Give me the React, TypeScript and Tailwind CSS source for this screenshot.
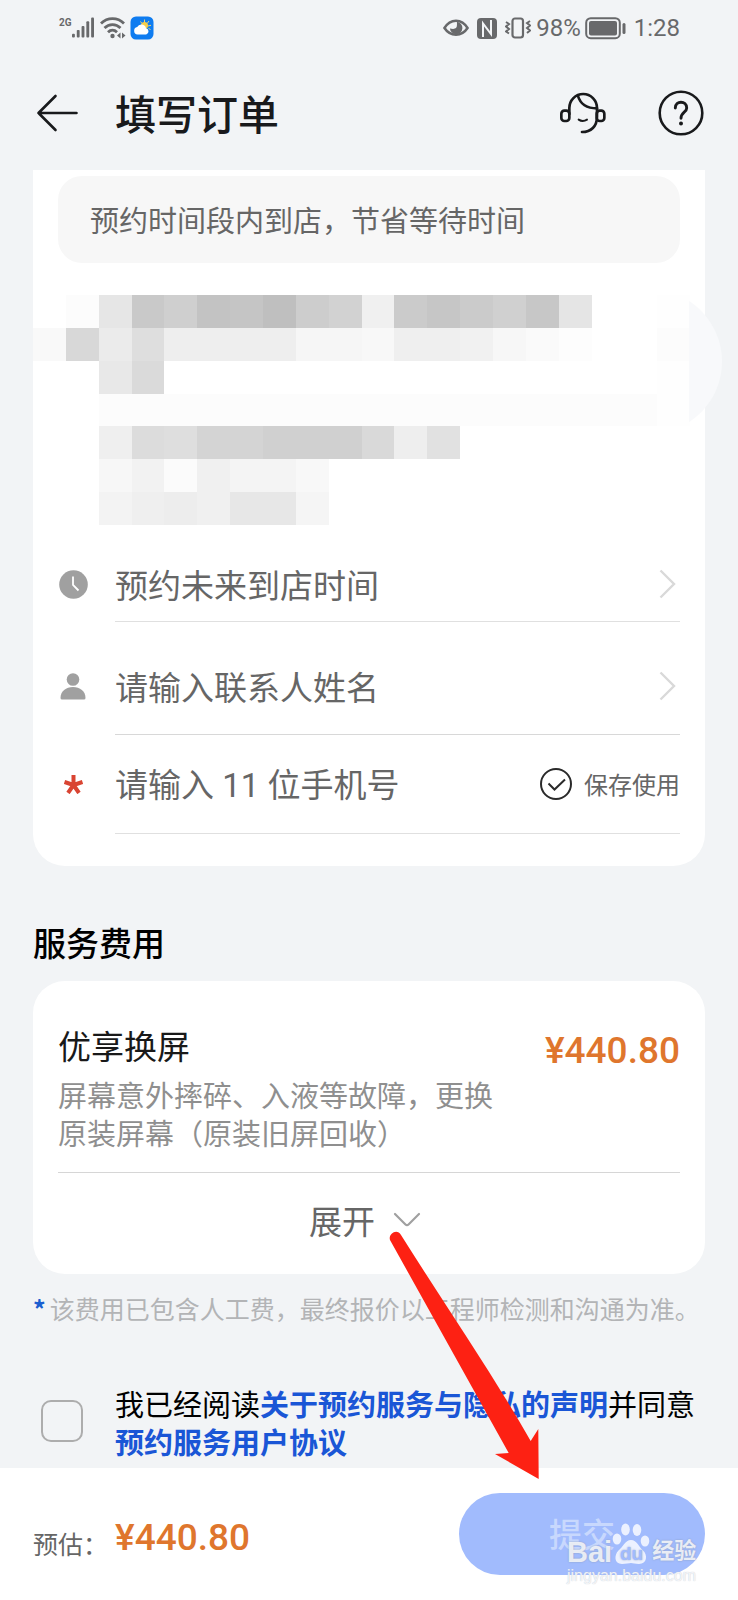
import React, { useState } from "react";

const FONT = "font-['Noto_Sans_CJK_SC',Roboto,sans-serif]";

// one entry per mosaic cell, "" is see-through
const mosaic: string[][] = [
  ["", "fcfcfc", "e6e6e6", "c9c9c9", "cfcfcf", "c3c3c3", "c5c5c5", "bfbfbf", "cdcdcd", "d2d2d2", "f0f0f0", "cbcbcb", "c6c6c6", "cbcbcb", "d0d0d0", "c7c7c7", "e5e5e5", "", "", "fefefe", ""],
  ["f9f9f9", "d8d8d8", "ebebeb", "dedede", "eeeeee", "eeeeee", "eeeeee", "eeeeee", "f6f6f6", "f6f6f6", "f8f8f8", "efefef", "efefef", "f1f1f1", "f7f7f7", "fafafa", "fdfdfd", "", "", "fcfcfc", ""],
  ["", "", "e8e8e8", "dadada", "", "", "", "", "", "", "", "", "", "", "", "", "", "", "", "fefefe", ""],
  ["", "", "fcfcfc", "fcfcfc", "fcfcfc", "fcfcfc", "fcfcfc", "fcfcfc", "fcfcfc", "fcfcfc", "fcfcfc", "fcfcfc", "fcfcfc", "fcfcfc", "fcfcfc", "fcfcfc", "fcfcfc", "fcfcfc", "fcfcfc", "fefefe", ""],
  ["", "", "efefef", "dcdcdc", "dedede", "d4d4d4", "d4d4d4", "d0d0d0", "d0d0d0", "d0d0d0", "d9d9d9", "eeeeee", "e1e1e1", "", "", "", "", "", "", "", ""],
  ["", "", "f7f7f7", "f2f2f2", "fbfbfb", "f0f0f0", "f4f4f4", "f4f4f4", "f8f8f8", "", "", "", "", "", "", "", "", "", "", "", ""],
  ["", "", "f3f3f3", "efefef", "ededed", "f0f0f0", "e7e7e7", "e7e7e7", "f5f5f5", "", "", "", "", "", "", "", "", "", "", "", ""],
];

const StatusBar = () => (
  <div className="flex h-14 items-center justify-between pl-[59px] pr-[58px] font-[Roboto,sans-serif] text-[#68696b]">
    <div className="flex items-center">
      <span className="self-start text-[10px] font-bold leading-[13px]">2G</span>
      <svg width="22" height="22" viewBox="0 0 23 22" fill="currentColor">
        <rect x="0" y="17" width="3" height="4" rx="1" />
        <rect x="5" y="13" width="3" height="8" rx="1" />
        <rect x="10" y="9" width="3" height="12" rx="1" />
        <rect x="15" y="4" width="3" height="17" rx="1" />
        <rect x="20" y="0" width="3" height="21" rx="1" />
      </svg>
      <svg className="ml-[6px]" width="26" height="22" viewBox="0 0 26 22" fill="none" stroke="currentColor" strokeWidth="2.8">
        <path d="M1 6.5C7.500 0 17.500 0 24 6.500" />
        <path d="M4.500 11C9 6.500 16 6.500 20.500 11" />
        <path d="M8 15.200C10.700 12.600 14.300 12.600 17 15.200" />
        <circle cx="12.500" cy="19" r="2.200" fill="currentColor" stroke="none" />
        <path d="M20.500 15.500v6l-3.500-3zM22 15.500v6l3.500-3z" fill="currentColor" stroke="none" />
      </svg>
      <svg className="ml-1" width="24" height="24" viewBox="0 0 24 24">
        <rect x="0.500" y="0.500" width="23" height="23" rx="5.500" fill="#0f7cf0" />
        <g stroke="#f4d46a" strokeWidth="1">
          <path d="M14.500 3.500v3M19 5l-1.800 2.400M21 9.300l-3 .7M20.500 13.500l-2-1M10.500 5.500l1.500 2" />
        </g>
        <circle cx="14.500" cy="9.500" r="3.500" fill="#f8cf4a" />
        <path d="M7.500 18.500a3.800 3.800 0 0 1-.3-7.500 4.700 4.700 0 0 1 8.800 1.300 3.200 3.200 0 0 1 .2 6.200z" fill="#fff" />
      </svg>
    </div>

    <div className="flex items-center text-2xl leading-7">
      <svg width="26" height="20" viewBox="0 0 27 20" fill="none" stroke="currentColor" strokeWidth="2.600">
        <path d="M1.500 10C7.500 -.2 19.500 -.2 25.500 10C19.500 19.200 7.500 19.200 1.500 10z" />
        <path d="M14.500 3.500a6.500 6.500 0 1 1-7.300 7l3.300.5a4 4 0 0 0 4-4z" fill="currentColor" stroke="none" />
      </svg>
      <svg className="ml-2" width="20" height="21" viewBox="0 0 20 21">
        <rect width="20" height="21" rx="4" fill="currentColor" />
        <path d="M6 19V5.500L14 16V2" fill="none" stroke="#f2f4f6" strokeWidth="2" />
      </svg>
      <svg className="ml-2" width="26" height="22" viewBox="0 0 26 22" fill="none" stroke="currentColor">
        <rect x="7.500" y="1.500" width="10.500" height="19" rx="2.500" strokeWidth="2.200" />
        <path d="M1 5l3 2-3 2.500 3 2.500-3 2.500 3 2M25 4l-3 2 3 2.500-3 2.500 3 2.500-3 2.500" strokeWidth="2" />
      </svg>
      <span className="ml-[5px]">98%</span>
      <svg className="ml-1" width="41" height="23" viewBox="0 0 41 23">
        <rect x="1.200" y="1.200" width="33.600" height="20" rx="4.500" fill="none" stroke="currentColor" strokeWidth="2" />
        <rect x="4" y="4" width="28" height="14.500" rx="2" fill="currentColor" />
        <rect x="37.500" y="6" width="3" height="11" rx="1.500" fill="currentColor" />
      </svg>
      <span className="ml-2">1:28</span>
    </div>
  </div>
);

const Header = () => (
  <header className="flex h-[114px] items-center pl-9 pr-[34px] text-[#191a1c]">
    <button aria-label="返回">
      <svg width="43" height="38" viewBox="0 0 43 38" fill="none" stroke="currentColor" strokeWidth="2.600" strokeLinecap="round" strokeLinejoin="round">
        <path d="M40.500 19H2.500M19.500 2L2.500 19L19.500 36" />
      </svg>
    </button>
    <h1 className="ml-9 flex-1 pb-[2px] text-[41px] font-medium leading-[56px]">填写订单</h1>
    <button aria-label="客服">
      <svg width="46" height="42" viewBox="0 0 138 126" fill="none" stroke="currentColor" strokeWidth="8" strokeLinecap="round">
        <rect x="4" y="56" width="24" height="31" rx="9" />
        <rect x="110" y="56" width="23" height="31" rx="9" />
        <path d="M28 66V48A41.500 42 0 0 1 111 48V74C111 103 93 120 66 120" />
        <path d="M54 12C61 36 81 49 111 49" />
        <path d="M56 83Q68 91 81 83" strokeWidth="6" />
      </svg>
    </button>
    <button className="ml-[52px]" aria-label="帮助">
      <svg width="46" height="46" viewBox="0 0 46 46" fill="none" stroke="currentColor" strokeWidth="2.600">
        <circle cx="23" cy="23" r="21.300" />
        <path d="M17.300 18C17.300 10.300 28.700 10.300 28.700 18C28.700 22.500 23 22 23 28.300" strokeWidth="2.900" strokeLinecap="round" />
        <circle cx="23" cy="33.500" r="2" fill="currentColor" stroke="none" />
      </svg>
    </button>
  </header>
);

const ChevronRight = () => (
  <svg className="mr-1 shrink-0" width="17" height="30" viewBox="0 0 17 30" fill="none" stroke="#d9d9d9" strokeWidth="2.400">
    <path d="M1.500 1.500L15 15L1.500 28.500" />
  </svg>
);

const Mosaic = () => (
  <div className="relative -mr-[18px] mt-8 h-[230px]">
    <svg className="absolute right-0 top-[6px]" width="34" height="121" viewBox="0 0 34 121">
      <path d="M0 0C20 13 33 36 33 60C33 86 20 108 0 121z" fill="#f8f9fb" />
    </svg>
    <div className="grid h-full grid-cols-21 grid-rows-7">
      {mosaic.flat().map((color, i) => (
        <div key={i} style={color ? { backgroundColor: `#${color}` } : undefined} />
      ))}
    </div>
  </div>
);

const BookingCard = () => {
  const [name, setName] = useState("");
  const [phone, setPhone] = useState("");

  return (
    <section className="mx-[33px] rounded-b-[32px] bg-white pb-8 pt-[6px]">
      <p className="mx-[25px] rounded-3xl bg-[#f7f7f7] px-8 py-6 text-[29px] leading-[39px] text-[#666]">
        预约时间段内到店，节省等待时间
      </p>

      <Mosaic />

      <div className="flex flex-col px-[25px] text-[33px] leading-[48px] text-[#666]">
        <div className="flex h-[97px]">
          <div className="flex w-[57px] shrink-0 items-center pt-[21px]">
            <svg className="ml-[1px]" width="29" height="29" viewBox="0 0 29 29">
              <circle cx="14.500" cy="14.500" r="14.300" fill="#a0a0a0" />
              <path d="M14 6.500V15L19.500 20.500" fill="none" stroke="#fff" strokeWidth="1.800" />
            </svg>
          </div>
          <button className="flex flex-1 items-center justify-between border-b border-[#e0e0e0] pt-[21px] text-left">
            预约未来到店时间
            <ChevronRight />
          </button>
        </div>

        <div className="flex h-[113px]">
          <div className="flex w-[57px] shrink-0 items-center pt-[15px]">
            <svg className="ml-[2px]" width="26" height="27" viewBox="0 0 26 27" fill="#a0a0a0">
              <circle cx="13" cy="6.500" r="6.300" />
              <path d="M.5 25C.5 18 6 14 13 14S25.500 18 25.500 25Q25.500 26.500 24 26.500H2Q.5 26.500 .5 25z" />
            </svg>
          </div>
          <div className="flex min-w-0 flex-1 items-center border-b border-[#d8d8d8] pt-[15px]">
            <input
              className="min-w-0 flex-1 bg-transparent outline-none placeholder:text-[#666]"
              placeholder="请输入联系人姓名"
              aria-label="联系人姓名"
              value={name}
              onChange={(e) => setName(e.target.value)}
            />
            <button aria-label="选择联系人">
              <ChevronRight />
            </button>
          </div>
        </div>

        <div className="flex h-[99px]">
          <div className="flex w-[57px] shrink-0 items-center">
            <svg className="ml-[6px]" width="19" height="19" viewBox="0 0 19 19" stroke="#d94432" strokeWidth="4">
              <path d="M9.500 10V0M9.500 10L.5 7M9.500 10L18.500 7M9.500 10L4 18M9.500 10L15 18" />
            </svg>
          </div>
          <div className="flex min-w-0 flex-1 items-center border-b border-[#e0e0e0]">
            <input
              className="min-w-0 flex-1 bg-transparent pt-1 font-[Roboto,'Noto_Sans_CJK_SC',sans-serif] outline-none placeholder:text-[#666]"
              type="tel"
              placeholder="请输入 11 位手机号"
              aria-label="手机号"
              value={phone}
              onChange={(e) => setPhone(e.target.value)}
            />
            <label className="flex items-center gap-3 text-2xl">
              <span className="relative size-8">
                <input type="checkbox" defaultChecked className="peer absolute inset-0 appearance-none rounded-full border-2 border-[#2a2a2a]" />
                <svg className="pointer-events-none absolute inset-0 hidden peer-checked:block" width="32" height="32" viewBox="0 0 32 32" fill="none" stroke="#2a2a2a" strokeWidth="2">
                  <path d="M8.500 15.500L14.500 21.500L25 11.500" />
                </svg>
              </span>
              保存使用
            </label>
          </div>
        </div>
      </div>
    </section>
  );
};

const FeeCard = () => (
  <section className="mx-[33px] mt-[52px]">
    <h2 className="text-[33px] font-medium leading-[48px] text-black">服务费用</h2>
    <div className="mt-[15px] rounded-[32px] bg-white px-[25px] pt-10">
      <div className="flex justify-between">
        <h3 className="text-[33px] leading-[48px] text-[#191919]">优享换屏</h3>
        <span className="pt-[6px] font-[Roboto,sans-serif] text-[37px] font-medium leading-[48px] text-[#df762d]">¥440.80</span>
      </div>
      <p className="max-w-[450px] text-[29px] leading-[38px] text-[#8f8f8f]">
        屏幕意外摔碎、入液等故障，更换原装屏幕（原装旧屏回收）
      </p>
      <button className="mt-[21px] flex h-[102px] w-full items-center justify-center gap-[18px] border-t border-[#d6d6d6] pb-[7px] pr-2 text-[33px] leading-[48px] text-[#666]">
        展开
        <svg width="28" height="16" viewBox="0 0 28 16" fill="none" stroke="#a0a0a0" strokeWidth="2.200" strokeLinecap="round" strokeLinejoin="round">
          <path d="M2 2L12.500 12.500Q14 14 15.500 12.500L26 2" />
        </svg>
      </button>
    </div>
    <p className="mt-[15px] flex gap-1 text-[25px] leading-[38px] text-[#b3b4b6]">
      <span className="font-bold text-[#1b5fd0]">*</span>
      <span className="whitespace-nowrap">该费用已包含人工费，最终报价以工程师检测和沟通为准。</span>
    </p>
  </section>
);

const Agreement = () => {
  const [agreed, setAgreed] = useState(false);

  return (
    <div className="flex px-[33px] pb-2 pt-[57px]">
      <input
        id="agree"
        type="checkbox"
        checked={agreed}
        onChange={() => setAgreed(!agreed)}
        className="ml-2 mt-4 size-[42px] shrink-0 appearance-none rounded-[10px] border-2 border-[#adadad] checked:bg-[#1a56d6]"
      />
      <label htmlFor="agree" className="ml-8 text-[29px] leading-[38px] text-black">
        我已经阅读
        <a href="#privacy" className="font-bold text-[#1a56d6]">关于预约服务与隐私的声明</a>
        并同意
        <br />
        <a href="#terms" className="font-bold text-[#1a56d6]">预约服务用户协议</a>
      </label>
    </div>
  );
};

const Watermark = () => (
  <div className="pointer-events-none absolute bottom-[14px] right-10 w-[131px] text-white/80">
    <div className="flex items-end font-['Liberation_Sans','Noto_Sans_CJK_SC',sans-serif] font-bold [text-shadow:0_0_2px_#8b9bbd]">
      <span className="text-[29px] leading-7">Bai</span>
      <svg className="shrink-0" width="38" height="43" viewBox="0 0 38 43">
        <g fill="#fff" fillOpacity="0.800">
          <ellipse cx="5" cy="16" rx="4.300" ry="5.500" />
          <ellipse cx="13.500" cy="6.500" rx="4.300" ry="6" />
          <ellipse cx="25" cy="7" rx="4.300" ry="6" />
          <ellipse cx="33" cy="18" rx="4.300" ry="5.500" />
          <path d="M19 17C25 17 27 24 31 27.500C36 32 35 41 27 41C23 41 21 40 19 40S14 41 10 41C2 41 2 32 6.500 27.500C11 24 13 17 19 17z" />
        </g>
        <text x="8" y="37" fontSize="19" fill="#a1bbfd">du</text>
      </svg>
      <span className="ml-[2px] whitespace-nowrap text-[22px] leading-[30px]">经验</span>
    </div>
    <div className="whitespace-nowrap font-['Liberation_Sans',sans-serif] text-base leading-5 [text-shadow:0_0_1px_#b4bccb]">jingyan.baidu.com</div>
  </div>
);

const App = () => {
  return (
    <div className={`relative flex min-h-screen flex-col overflow-hidden bg-[#f2f4f6] ${FONT}`}>
      <StatusBar />
      <Header />
      <main className="flex-1">
        <BookingCard />
        <FeeCard />
        <Agreement />
      </main>

      <footer className="relative flex h-[132px] items-start bg-white px-[33px] pt-[25px]">
        <span className="mt-[30px] text-[25px] leading-10 text-[#666]">预估：</span>
        <span className="ml-[7px] mt-[21px] flex-1 font-[Roboto,sans-serif] text-[37px] font-medium leading-[48px] text-[#df762d]">¥440.80</span>
        <button className="h-[82px] w-[246px] rounded-full bg-[#a1bbfd] text-[33px] font-medium text-[#c8d8fd]">提交</button>
        <Watermark />
      </footer>

      {/* red pointer towards the submit button */}
      <svg className="pointer-events-none absolute bottom-[120px] right-[198px]" width="151" height="250" viewBox="0 0 151 250" fill="#fd2113">
        <path d="M1 10C-1 4 8 -2 12 5C56 75 103 143 141.700 211L149.300 199L149.700 249L106 224L119.700 223Z" />
      </svg>
    </div>
  );
};

export default App;
